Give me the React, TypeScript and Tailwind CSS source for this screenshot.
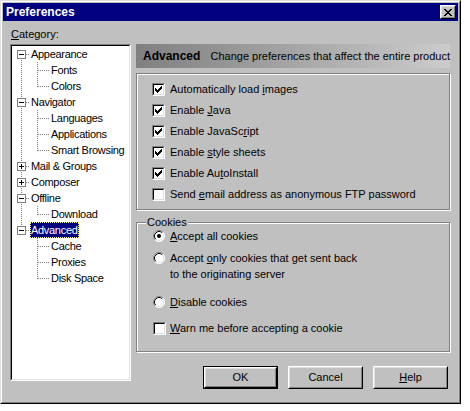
import React from "react";

type TreeNode = { label: string; children: string[]; expanded: boolean; selected?: boolean };

const tree: TreeNode[] = [
  { label: "Appearance", children: ["Fonts", "Colors"], expanded: true },
  { label: "Navigator", children: ["Languages", "Applications", "Smart Browsing"], expanded: true },
  { label: "Mail & Groups", children: [], expanded: false },
  { label: "Composer", children: [], expanded: false },
  { label: "Offline", children: ["Download"], expanded: true },
  { label: "Advanced", children: ["Cache", "Proxies", "Disk Space"], expanded: true, selected: true },
];

const checkPixels: [number, number, number][] = [
  [6, 0, 1],
  [5, 1, 2],
  [0, 2, 1],
  [4, 2, 3],
  [0, 3, 2],
  [3, 3, 3],
  [0, 4, 5],
  [1, 5, 3],
  [2, 6, 1],
];

const xPixels: [number, number, number][] = [
  [0, 0, 2],
  [6, 0, 2],
  [1, 1, 2],
  [5, 1, 2],
  [2, 2, 4],
  [3, 3, 2],
  [2, 4, 4],
  [1, 5, 2],
  [5, 5, 2],
  [0, 6, 2],
  [6, 6, 2],
];

function Check({ checked }: { checked: boolean }) {
  return (
    <span className="block w-[13px] h-[13px] shrink-0 border border-t-[#808080] border-l-[#808080] border-b-white border-r-white">
      <span className="flex w-full h-full items-center justify-center border border-t-black border-l-black border-b-[#dfdfdf] border-r-[#dfdfdf] bg-white">
        {checked && (
          <svg width="7" height="7" shapeRendering="crispEdges">
            {checkPixels.map(([x, y, w], i) => (
              <rect key={i} x={x} y={y} width={w} height={1} fill="#000" />
            ))}
          </svg>
        )}
      </span>
    </span>
  );
}

function Radio({ checked }: { checked: boolean }) {
  return (
    <svg width="12" height="12" className="shrink-0 block">
      <circle cx="6" cy="6" r="5.5" fill="#fff" />
      <path d="M2.11 9.89 A5.5 5.5 0 0 1 9.89 2.11" fill="none" stroke="#808080" />
      <path d="M9.89 2.11 A5.5 5.5 0 0 1 2.11 9.89" fill="none" stroke="#ffffff" />
      <path d="M2.82 9.18 A4.5 4.5 0 0 1 9.18 2.82" fill="none" stroke="#000" />
      <path d="M9.18 2.82 A4.5 4.5 0 0 1 2.82 9.18" fill="none" stroke="#dfdfdf" />
      {checked && <circle cx="6" cy="6" r="2" fill="#000" />}
    </svg>
  );
}

function Btn({ children, def }: { children: React.ReactNode; def?: boolean }) {
  return (
    <div className={def ? "w-[75px] h-[23px] border border-black" : "w-[75px] h-[23px]"}>
      <div className="w-full h-full border border-t-white border-l-white border-b-black border-r-black">
        <div className="w-full h-full border border-t-[#dfdfdf] border-l-[#dfdfdf] border-b-[#808080] border-r-[#808080] flex items-center justify-center">
          {children}
        </div>
      </div>
    </div>
  );
}

function CloseBtn() {
  return (
    <div className="w-[16px] h-[14px] bg-[#c0c0c0] border border-t-white border-l-white border-b-black border-r-black">
      <div className="w-full h-full border border-t-[#dfdfdf] border-l-[#dfdfdf] border-b-[#808080] border-r-[#808080] flex items-center justify-center">
        <svg width="8" height="7" shapeRendering="crispEdges">
          {xPixels.map(([x, y, w], i) => (
            <rect key={i} x={x} y={y} width={w} height={1} fill="#000" />
          ))}
        </svg>
      </div>
    </div>
  );
}

const DOT = { stroke: "#808080", strokeDasharray: "1 1", shapeRendering: "crispEdges" as const };

function Tree() {
  const rows: React.ReactNode[] = [];
  tree.forEach((node, i) => {
    const first = i === 0;
    const last = i === tree.length - 1;
    rows.push(
      <div key={node.label} className="flex h-[16px] items-center">
        <svg width="18" height="16" className="shrink-0 block">
          {!first && <line x1="9.5" y1="0" x2="9.5" y2="4" {...DOT} />}
          {!last && <line x1="9.5" y1="14" x2="9.5" y2="16" {...DOT} />}
          <line x1="14" y1="8.5" x2="18" y2="8.5" {...DOT} />
          <rect x="5.5" y="4.5" width="8" height="8" fill="#fff" stroke="#808080" shapeRendering="crispEdges" />
          <rect x="7" y="8" width="5" height="1" fill="#000" shapeRendering="crispEdges" />
          {!node.expanded && <rect x="9" y="6" width="1" height="5" fill="#000" shapeRendering="crispEdges" />}
        </svg>
        <span
          className={
            node.selected
              ? "px-[1px] h-[16px] leading-[16px] whitespace-nowrap tracking-[-0.3px] bg-[#000080] text-white outline-1 outline-dotted outline-[#ffff80] -outline-offset-1"
              : "px-[1px] h-[16px] leading-[16px] whitespace-nowrap tracking-[-0.3px]"
          }
        >
          {node.label}
        </span>
      </div>
    );
    if (node.expanded) {
      node.children.forEach((c, j) => {
        const lastChild = j === node.children.length - 1;
        rows.push(
          <div key={node.label + c} className="flex h-[16px] items-center">
            <svg width="38" height="16" className="shrink-0 block">
              {!last && <line x1="9.5" y1="0" x2="9.5" y2="16" {...DOT} />}
              <line x1="25.5" y1="0" x2="25.5" y2={lastChild ? 9 : 16} {...DOT} />
              <line x1="26" y1="8.5" x2="37" y2="8.5" {...DOT} />
            </svg>
            <span className="px-[1px] h-[16px] leading-[16px] whitespace-nowrap tracking-[-0.3px]">{c}</span>
          </div>
        );
      });
    }
  });
  return <div className="flex flex-col">{rows}</div>;
}

function CheckRow({ checked, children }: { checked: boolean; children: React.ReactNode }) {
  return (
    <div className="flex h-[21px] items-center gap-[5px]">
      <Check checked={checked} />
      <span className="whitespace-nowrap">{children}</span>
    </div>
  );
}

export default function App() {
  return (
    <div className="min-h-screen bg-white font-['Liberation_Sans',Arial,sans-serif] text-[11px] text-black">
      <div className="w-[461px] h-[404px] border border-t-[#dfdfdf] border-l-[#dfdfdf] border-b-black border-r-black">
        <div className="w-full h-full border border-t-white border-l-white border-b-[#808080] border-r-[#808080] bg-[#c0c0c0] p-[1px] flex flex-col">
          <div className="h-[18px] shrink-0 bg-[#000080] flex items-center pl-[3px] pr-[2px]">
            <span className="text-white font-bold text-[12px] flex-1 leading-[18px]">Preferences</span>
            <CloseBtn />
          </div>
          <div className="flex flex-1 pl-[7px] gap-[5px]">
            <div className="flex flex-col w-[121px]">
              <div className="mt-[7px] h-[13px] leading-[13px] pl-[1px]">
                <u>C</u>ategory:
              </div>
              <div className="mt-[3px] h-[337px] border border-t-[#808080] border-l-[#808080] border-b-white border-r-white">
                <div className="w-full h-full border border-t-black border-l-black border-b-[#dfdfdf] border-r-[#dfdfdf] bg-white overflow-hidden">
                  <Tree />
                </div>
              </div>
            </div>
            <div className="flex flex-col w-[314px] pt-[23px]">
              <div className="h-[24px] flex items-center pl-[7px] bg-linear-to-r from-[#808080] to-[#cccccc]">
                <span className="w-[75px] font-bold text-[12px]">Advanced</span>
                <span className="whitespace-nowrap">Change preferences that affect the entire product</span>
              </div>
              <div className="mt-[5px] h-[137px] border border-[#808080] shadow-[inset_1px_1px_0_#fff,1px_1px_0_#fff] pt-[5px] pl-[15px]">
                <CheckRow checked>
                  Automatically load <u>i</u>mages
                </CheckRow>
                <CheckRow checked>
                  Enable <u>J</u>ava
                </CheckRow>
                <CheckRow checked>
                  Enable JavaSc<u>r</u>ipt
                </CheckRow>
                <CheckRow checked>
                  Enable <u>s</u>tyle sheets
                </CheckRow>
                <CheckRow checked>
                  Enable Au<u>t</u>oInstall
                </CheckRow>
                <CheckRow checked={false}>
                  Send <u>e</u>mail address as anonymous FTP password
                </CheckRow>
              </div>
              <div className="relative mt-[12px] h-[130px] border border-[#808080] shadow-[inset_1px_1px_0_#fff,1px_1px_0_#fff] pt-[5px] pl-[16px]">
                <span className="absolute -top-[7px] left-[9px] px-[1px] bg-[#c0c0c0] leading-[13px]">Cookies</span>
                <div className="flex h-[16px] items-center gap-[5px]">
                  <Radio checked />
                  <span>
                    <u>A</u>ccept all cookies
                  </span>
                </div>
                <div className="flex mt-[6px] items-start gap-[5px]">
                  <div className="h-[16px] flex items-center">
                    <Radio checked={false} />
                  </div>
                  <span className="leading-[16px]">
                    Accept <u>o</u>nly cookies that get sent back
                    <br />
                    to the originating server
                  </span>
                </div>
                <div className="flex mt-[12px] h-[16px] items-center gap-[5px]">
                  <Radio checked={false} />
                  <span>
                    <u>D</u>isable cookies
                  </span>
                </div>
                <div className="flex mt-[10px] h-[16px] items-center gap-[4px]">
                  <Check checked={false} />
                  <span>
                    <u>W</u>arn me before accepting a cookie
                  </span>
                </div>
              </div>
              <div className="mt-[14px] flex justify-end gap-[10px] pr-[2px]">
                <Btn def>OK</Btn>
                <Btn>Cancel</Btn>
                <Btn>
                  <span>
                    <u>H</u>elp
                  </span>
                </Btn>
              </div>
            </div>
          </div>
        </div>
      </div>
    </div>
  );
}
